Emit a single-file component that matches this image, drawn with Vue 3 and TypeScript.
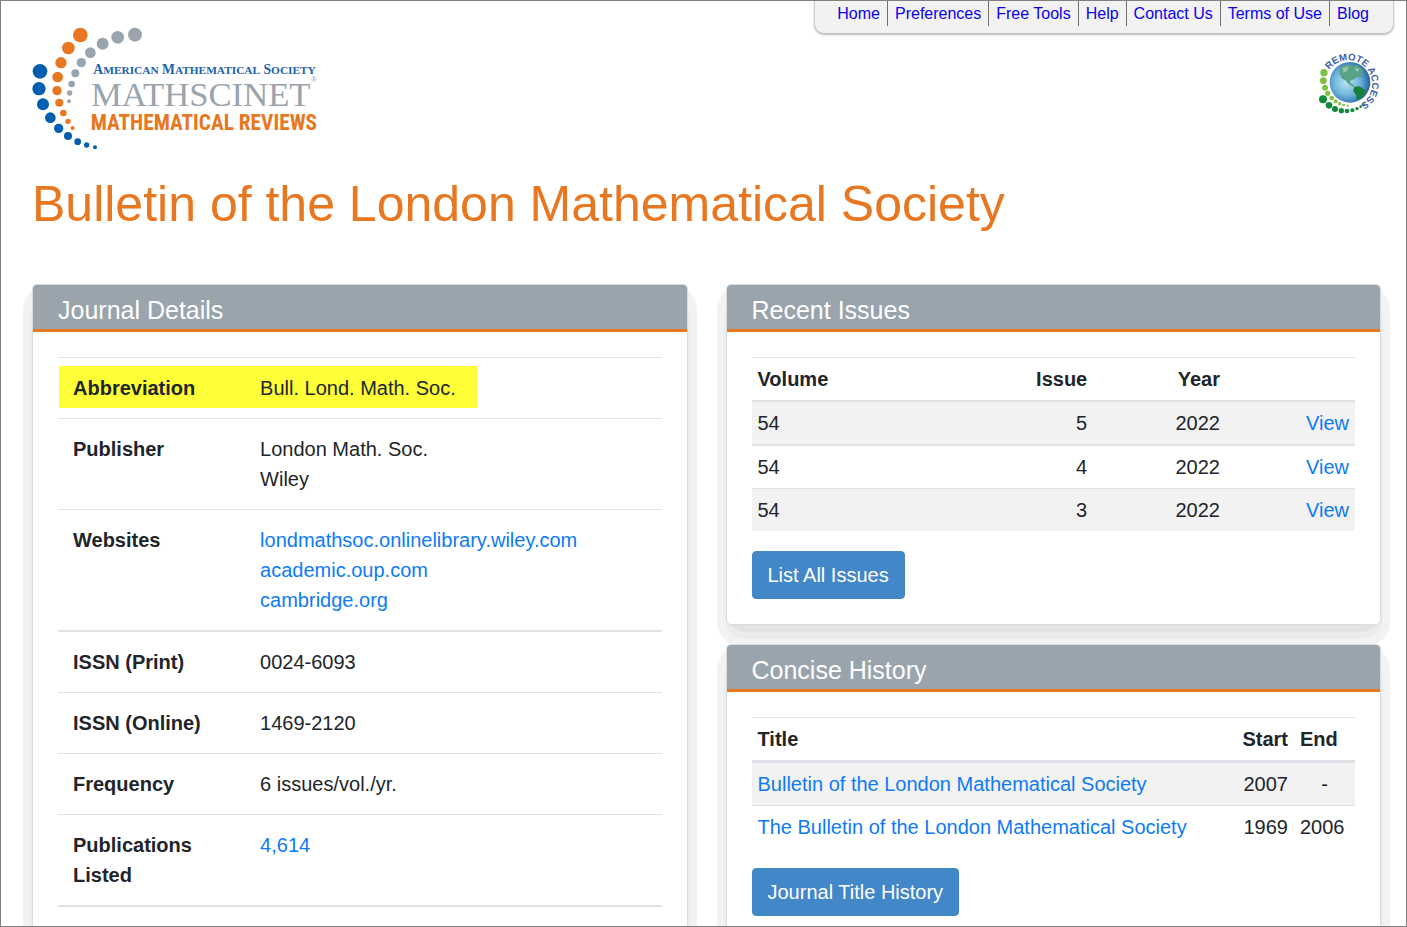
<script setup lang="ts">
interface Detail {
  label: string
  lines: string[]
  link?: boolean
  mark?: boolean
  thick?: boolean
}

const navItems: string[] = ['Home', 'Preferences', 'Free Tools', 'Help', 'Contact Us', 'Terms of Use', 'Blog']

const details: Detail[] = [
  { label: 'Abbreviation', lines: ['Bull. Lond. Math. Soc.'], mark: true },
  { label: 'Publisher', lines: ['London Math. Soc.', 'Wiley'] },
  { label: 'Websites', lines: ['londmathsoc.onlinelibrary.wiley.com', 'academic.oup.com', 'cambridge.org'], link: true },
  { label: 'ISSN (Print)', lines: ['0024-6093'], thick: true },
  { label: 'ISSN (Online)', lines: ['1469-2120'] },
  { label: 'Frequency', lines: ['6 issues/vol./yr.'] },
  { label: 'Publications Listed', lines: ['4,614'], link: true },
]

const issues = [
  { volume: 54, issue: 5, year: 2022 },
  { volume: 54, issue: 4, year: 2022 },
  { volume: 54, issue: 3, year: 2022 },
]

const history = [
  { title: 'Bulletin of the London Mathematical Society', start: '2007', end: '-' },
  { title: 'The Bulletin of the London Mathematical Society', start: '1969', end: '2006' },
]

type Dot = [number, number, number]
const orangeDots: Dot[] = [[181, 60, 22], [145, 99, 19], [123, 143, 17], [113, 186, 16], [111, 227, 14], [118, 263, 12], [130, 294, 10], [144, 319, 8], [158, 339, 6]]
const grayDots: Dot[] = [[345, 59, 21], [293, 67, 19], [248, 86, 18], [211, 113, 16], [184, 143, 14], [166, 175, 12], [155, 207, 10], [149, 234, 8], [147, 259, 6]]
const blueDots: Dot[] = [[60, 169, 22], [57, 221, 20], [69, 268, 18], [91, 308, 16], [116, 340, 14], [144, 363, 12], [173, 380, 10], [200, 390, 8], [225, 397, 6]]

const lightDots: Dot[] = [[72, 98, 11], [70, 122, 10], [75, 143, 9], [83, 160, 8], [95, 174, 7], [107, 184, 6], [119, 191, 5], [131, 195, 4], [144, 197, 3]]
const darkDots: Dot[] = [[69, 178, 12], [87, 196, 10], [105, 207, 9], [124, 212, 8], [141, 213, 7], [157, 211, 6], [171, 206, 5], [182, 200, 4], [192, 193, 3]]
</script>

<template>
  <div class="page">
    <header class="top">
      <svg class="logo" width="310" height="145" viewBox="0 0 930 435" role="img" aria-label="MathSciNet">
        <g fill="#e87722"><circle v-for="(d, i) in orangeDots" :key="i" :cx="d[0]" :cy="d[1]" :r="d[2]" /></g>
        <g fill="#99a4ad"><circle v-for="(d, i) in grayDots" :key="i" :cx="d[0]" :cy="d[1]" :r="d[2]" /></g>
        <g fill="#005eb0"><circle v-for="(d, i) in blueDots" :key="i" :cx="d[0]" :cy="d[1]" :r="d[2]" /></g>
        <text class="l-ams" x="220" y="177">A<tspan class="sm">MERICAN</tspan> M<tspan class="sm">ATHEMATICAL</tspan> S<tspan class="sm">OCIETY</tspan></text>
        <text class="l-name" x="213" y="273">MATHSCINET</text>
        <text class="l-reg" x="874" y="202">®</text>
        <text class="l-rev" x="212" y="346">MATHEMATICAL REVIEWS</text>
      </svg>
      <div class="side">
        <nav class="menu" aria-label="Site">
          <a v-for="n in navItems" :key="n" href="#">{{ n }}</a>
        </nav>
        <svg class="remote" width="78" height="78" viewBox="48 24 234 234" role="img" aria-label="Remote access">
          <defs>
            <radialGradient id="sea" cx="0.42" cy="0.5" r="0.6">
              <stop offset="0" stop-color="#b9e4f2" />
              <stop offset="0.55" stop-color="#6db4dc" />
              <stop offset="1" stop-color="#1c5c9c" />
            </radialGradient>
            <path id="ring" d="M88 90 A71 71 0 1 1 186 190" />
          </defs>
          <circle cx="150" cy="127" r="61" fill="url(#sea)" />
          <path d="M118 88 Q130 74 148 75 L160 78 L170 75 Q184 82 191 94 L184 98 L188 106 L177 113 L170 110 L164 118 L153 120 L150 128 L158 133 L166 139 L158 140 L146 133 L136 121 L126 116 L119 103Z" fill="#5aa188" />
          <path d="M128 84 L146 79 L142 92 L131 98Z M163 84 L178 86 L172 97Z" fill="#9cc6ae" />
          <path d="M162 142 L176 138 L188 145 L197 153 Q192 168 178 178 L170 181 L169 166 L160 154Z" fill="#17803b" />
          <g fill="#7fc241"><circle v-for="(d, i) in lightDots" :key="i" :cx="d[0]" :cy="d[1]" :r="d[2]" /></g>
          <g fill="#128a3c"><circle v-for="(d, i) in darkDots" :key="i" :cx="d[0]" :cy="d[1]" :r="d[2]" /></g>
          <text class="l-remote"><textPath href="#ring">REMOTE ACCESS</textPath></text>
        </svg>
      </div>
    </header>

    <main class="main">
      <h1>Bulletin of the London Mathematical Society</h1>
      <div class="columns">
        <section class="card">
          <h2>Journal Details</h2>
          <div class="body">
            <table class="details">
              <tbody>
                <tr v-for="d in details" :key="d.label" :class="{ mark: d.mark, thick: d.thick }">
                  <th scope="row">{{ d.label }}</th>
                  <td>
                    <div v-for="l in d.lines" :key="l">
                      <a v-if="d.link" href="#">{{ l }}</a>
                      <template v-else>{{ l }}</template>
                    </div>
                  </td>
                </tr>
              </tbody>
            </table>
          </div>
        </section>

        <div class="stack">
          <section class="card">
            <h2>Recent Issues</h2>
            <div class="body">
              <table class="list issues">
                <thead>
                  <tr><th scope="col">Volume</th><th scope="col">Issue</th><th scope="col">Year</th><th></th></tr>
                </thead>
                <tbody>
                  <tr v-for="r in issues" :key="r.issue">
                    <td>{{ r.volume }}</td><td>{{ r.issue }}</td><td>{{ r.year }}</td><td><a href="#">View</a></td>
                  </tr>
                </tbody>
              </table>
              <button type="button">List All Issues</button>
            </div>
          </section>

          <section class="card">
            <h2>Concise History</h2>
            <div class="body">
              <table class="list history">
                <thead>
                  <tr><th scope="col">Title</th><th scope="col">Start</th><th scope="col">End</th></tr>
                </thead>
                <tbody>
                  <tr v-for="r in history" :key="r.title">
                    <td><a href="#">{{ r.title }}</a></td>
                    <td>{{ r.start }}</td>
                    <td :class="{ none: r.end === '-' }">{{ r.end }}</td>
                  </tr>
                </tbody>
              </table>
              <button type="button">Journal Title History</button>
            </div>
          </section>
        </div>
      </div>
    </main>
  </div>
</template>

<style>
body {
  margin: 0;
}
</style>

<style scoped>
.page {
  box-sizing: border-box;
  height: 100vh;
  overflow: hidden;
  isolation: isolate;
  border: 1px solid #7f7f7f;
  background: #fff;
  color: #212529;
  font-family: "Liberation Sans", Arial, sans-serif;
  font-size: 20px;
  line-height: 30px;
}
a {
  color: #0d7bf5;
  text-decoration: none;
}
.top {
  display: flex;
  justify-content: space-between;
  align-items: flex-start;
  padding: 0 12px 0 19px;
}
.logo {
  margin-top: 14px;
}
.side {
  display: flex;
  flex-direction: column;
  align-items: flex-end;
}
.menu {
  display: flex;
  padding: 0 17px 7px 15px;
  border: 1px solid #d0cfcd;
  border-top: 0;
  border-bottom: 1px solid #c4c2c0;
  border-radius: 0 0 10px 10px;
  background: #f2f2f2;
  box-shadow: 0 1px 2px #bbb;
  font-size: 16px;
  line-height: 24px;
}
.menu a {
  padding: 1px 7px 0;
  color: #0a00f0;
}
.menu a + a {
  border-left: 1px solid #6f6f6f;
}
.remote {
  margin-top: 14px;
}
.l-ams {
  font: bold 41px "Liberation Serif", serif;
  fill: #1c5fae;
}
.sm {
  font-size: 34px;
}
.l-name {
  font: 104px "Liberation Serif", serif;
  fill: #99a4ad;
}
.l-reg {
  font: 22px "Liberation Sans", sans-serif;
  fill: #99a4ad;
}
.l-rev {
  font: bold 64px "Liberation Sans Narrow", "Roboto Condensed", "Liberation Sans", sans-serif;
  fill: #e87722;
}
.l-remote {
  font: bold 29px "Liberation Sans", sans-serif;
  fill: #3d5da8;
}
.main {
  padding: 13px 25px 0 31px;
}
h1 {
  margin: 0 0 50px;
  color: #e87722;
  font-size: 50px;
  font-weight: 400;
  line-height: 60px;
}
.top + .main {
  padding-top: 14px;
}
.columns {
  display: grid;
  grid-template-columns: 1fr 1fr;
  gap: 38px;
}
.stack {
  display: flex;
  flex-direction: column;
  gap: 19px;
}
.card {
  position: relative;
  border: 1px solid #dcdcdc;
  border-radius: 5px;
  background: #fff;
}
.card::before,
.card::after {
  content: "";
  position: absolute;
}
.card::before {
  z-index: -2;
  inset: 1px -10px -22px;
  border-radius: 24px;
  background: #f2f2f2;
}
.card::after {
  z-index: -1;
  inset: 12px -3px -15px;
  border: solid #ebeceb;
  border-width: 0 3px 7px;
  border-radius: 22px;
  background: #e2e2e2;
}
h2 {
  margin: 0;
  padding: 10px 25px 4px;
  border-bottom: 3px solid #e87722;
  border-radius: 4px 4px 0 0;
  background: #99a4ad;
  color: #fff;
  font-size: 25px;
  font-weight: 400;
  line-height: 30px;
}
.body {
  padding: 25px;
}
table {
  width: 100%;
  border-spacing: 0;
  table-layout: fixed;
}
th,
td {
  border-top: 1px solid #dee2e6;
  text-align: left;
  vertical-align: top;
}
.details {
  border-bottom: 2px solid #dee2e6;
}
.details th,
.details td {
  padding: 15px;
}
.details th {
  width: 31%;
  box-sizing: border-box;
}
.thick th,
.thick td {
  border-top-width: 2px;
}
.mark {
  position: relative;
  z-index: 0;
}
.mark th::before {
  content: "";
  position: absolute;
  z-index: -1;
  top: 9px;
  bottom: 10px;
  left: 1px;
  width: 418px;
  background: #ffff37;
}
.list th,
.list td {
  box-sizing: border-box;
  padding: 6px;
}
.list tbody tr:nth-child(odd) {
  background: #f2f2f2;
}
.issues th:nth-child(2) {
  width: 30%;
}
.issues th:nth-child(3) {
  width: 22%;
}
.issues th:nth-child(4) {
  width: 129px;
}
.issues :is(th, td):not(:first-child) {
  text-align: right;
}
.issues tr:first-child td,
.issues tr:nth-child(2) td {
  border-top-width: 2px;
}
.history th:nth-child(2) {
  width: 64px;
}
.history th:nth-child(3) {
  width: 61px;
}
.history :is(th, td):nth-child(2) {
  text-align: right;
}
.history tr:first-child td {
  border-top-width: 3px;
}
.history .none {
  text-align: center;
}
button {
  display: block;
  margin-top: 20px;
  padding: 8px 15px;
  border: 1px solid #4287c8;
  border-radius: 4px;
  background: #4287c8;
  color: #fff;
  font: inherit;
}
</style>
